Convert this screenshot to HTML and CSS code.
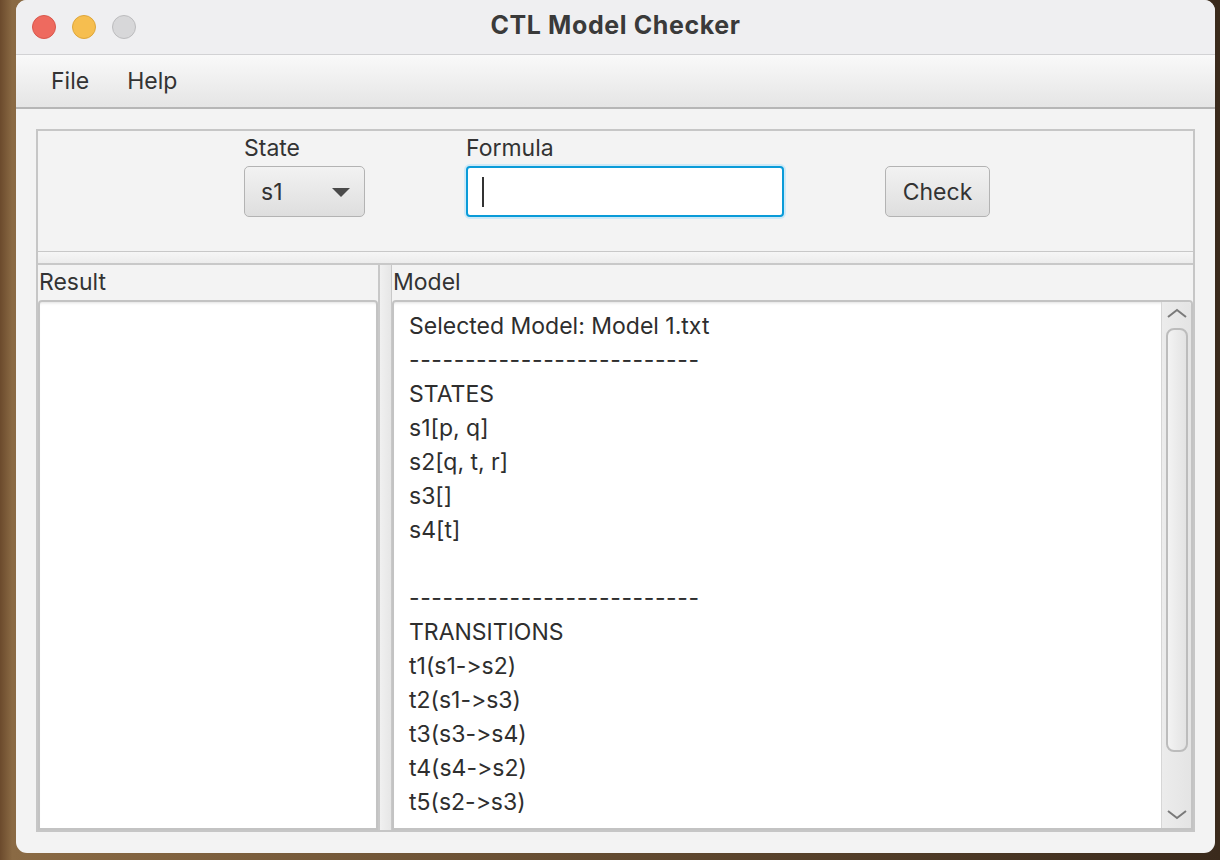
FILE: index.html
```html
<!DOCTYPE html>
<html>
<head>
<meta charset="utf-8">
<title>CTL Model Checker</title>
<link rel="stylesheet" href="styles.css">
</head>
<body>
<div class="window">
  <div class="titlebar">
    <div class="lights">
      <span class="light red"></span>
      <span class="light yellow"></span>
      <span class="light gray"></span>
    </div>
    <div class="title">CTL Model Checker</div>
    <div></div>
  </div>
  <div class="menubar">
    <span class="menu">File</span>
    <span class="menu">Help</span>
  </div>
  <div class="content">
    <div class="split">
      <div class="toppane">
        <div class="field state">
          <div class="label">State</div>
          <div class="combo">
            <span>s1</span>
            <svg class="caret" width="18" height="9" viewBox="0 0 18 9"><path d="M0 0 H18 L9 9 Z" fill="#4a4a4a"/></svg>
          </div>
        </div>
        <div class="field formula">
          <div class="label">Formula</div>
          <div class="textfield"><span class="cursor"></span></div>
        </div>
        <div class="btn">Check</div>
      </div>
      <div class="hdivider"></div>
      <div class="bottompane">
        <div class="pane result">
          <div class="plabel">Result</div>
          <div class="area"></div>
        </div>
        <div class="vdivider"></div>
        <div class="pane model">
          <div class="plabel">Model</div>
          <div class="area modelarea">
            <div class="text">
              <div>Selected Model: Model 1.txt</div>
              <div class="rule">--------------------------</div>
              <div>STATES</div>
              <div>s1[p, q]</div>
              <div>s2[q, t, r]</div>
              <div>s3[]</div>
              <div>s4[t]</div>
              <div>&nbsp;</div>
              <div class="rule">--------------------------</div>
              <div>TRANSITIONS</div>
              <div>t1(s1-&gt;s2)</div>
              <div>t2(s1-&gt;s3)</div>
              <div>t3(s3-&gt;s4)</div>
              <div>t4(s4-&gt;s2)</div>
              <div>t5(s2-&gt;s3)</div>
            </div>
            <div class="scrollbar">
              <svg class="arrow" width="20" height="10" viewBox="0 0 20 10"><path d="M1 9 L10 2 L19 9" fill="none" stroke="#7a7a7a" stroke-width="2"/></svg>
              <div class="thumb"></div>
              <svg class="arrow" width="20" height="10" viewBox="0 0 20 10"><path d="M1 1 L10 8 L19 1" fill="none" stroke="#7a7a7a" stroke-width="2"/></svg>
            </div>
          </div>
        </div>
      </div>
    </div>
  </div>
</div>
</body>
</html>
```
FILE: styles.css
```css
* { box-sizing: border-box; }
html, body { margin: 0; height: 860px; overflow: hidden; }
body {
  background: linear-gradient(90deg, #6b4a2c 0%, #8a6a44 1%, #3a2a1c 100%);
  font-family: Inter, "Liberation Sans", sans-serif;
  font-feature-settings: "calt" 0, "liga" 0;
  font-variant-ligatures: none;
  color: #2b2b2b;
}
.window {
  margin-left: 16px;
  width: 1199px;
  height: 853px;
  border-radius: 11px;
  overflow: hidden;
  background: #f3f3f3;
  display: flex;
  flex-direction: column;
}
.titlebar {
  height: 55px;
  background: #efeff1;
  border-bottom: 1px solid #d2d2d4;
  display: grid;
  grid-template-columns: 1fr auto 1fr;
  align-items: center;
}
.lights { display: flex; gap: 16px; padding-left: 16px; }
.light { width: 24px; height: 24px; border-radius: 50%; display: block; }
.red { background: #ee6a5f; border: 1px solid #d9574c; }
.yellow { background: #f6be4f; border: 1px solid #dea63a; }
.gray { background: #d7d7d9; border: 1px solid #bcbcbe; }
.title { font-weight: 700; font-size: 25px; letter-spacing: 0.6px; color: #3a3a3a; margin-top: -4px; }
.menubar {
  height: 54px;
  background: linear-gradient(#f9f9f9, #e5e5e5);
  border-bottom: 2px solid #b6b6b6;
  display: flex;
  align-items: center;
  padding-left: 35px;
  gap: 38px;
  font-size: 23px;
  color: #333;
}
.content { flex: 1; padding: 20px 20px 21px 20px; display: flex; }
.split {
  flex: 1;
  border: 2px solid #c6c6c6;
  display: flex;
  flex-direction: column;
}
.toppane {
  height: 120px;
  display: flex;
  align-items: flex-end;
  padding: 0 0 34px 206px;
}
.field { display: flex; flex-direction: column; gap: 3px; }
.label { font-size: 23px; color: #333; line-height: 30px; }
.state { width: 120px; }
.formula { margin-left: 102px; }
.combo {
  width: 121px;
  height: 51px;
  border: 1px solid #b3b3b3;
  border-radius: 5px;
  background: linear-gradient(#f2f2f2, #dedede);
  display: flex;
  align-items: center;
  justify-content: space-between;
  padding: 0 14px 0 16px;
  font-size: 23px;
  color: #333;
}
.caret { margin-top: 1px; }
.textfield {
  width: 318px;
  height: 51px;
  border: 2px solid #0a9bd8;
  border-radius: 4px;
  background: #fff;
  box-shadow: 0 0 0 2px #cde9f7;
  display: flex;
  align-items: center;
  padding-left: 14px;
}
.cursor { width: 2px; height: 30px; background: #333; }
.btn {
  margin-left: 101px;
  width: 105px;
  height: 51px;
  border: 1px solid #b3b3b3;
  border-radius: 5px;
  background: linear-gradient(#f2f2f2, #dedede);
  display: flex;
  align-items: center;
  justify-content: center;
  font-size: 23px;
  color: #333;
}
.hdivider {
  height: 14px;
  border-top: 1px solid #c8c8c8;
  border-bottom: 2px solid #c8c8c8;
  background: linear-gradient(#f6f6f6, #ececec);
}
.bottompane { flex: 1; display: flex; }
.pane { display: flex; flex-direction: column; }
.result { width: 340px; }
.model { flex: 1; }
.vdivider {
  width: 14px;
  border-left: 2px solid #c8c8c8;
  border-right: 1px solid #c8c8c8;
  background: linear-gradient(90deg, #f0f0f0, #e6e6e6);
}
.plabel { font-size: 23px; color: #333; height: 35px; line-height: 35px; padding-left: 1px; }
.area {
  flex: 1;
  background: #fff;
  border: 2px solid #c3c3c3;
  border-radius: 4px 4px 0 0;
  box-shadow: inset 0 3px 3px -2px rgba(0,0,0,0.12);
}
.modelarea { display: flex; }
.text {
  flex: 1;
  padding: 7px 0 0 15px;
  font-size: 23px;
  line-height: 34px;
  color: #2e2e2e;
}
.rule { letter-spacing: 0.6px; }
.scrollbar {
  width: 30px;
  border-left: 1px solid #d6d6d6;
  background: linear-gradient(90deg, #ececec, #e4e4e4);
  border-top-right-radius: 4px;
  display: flex;
  flex-direction: column;
  align-items: center;
  padding: 6px 0 8px;
}
.arrow { display: block; }
.thumb {
  margin: 10px 0 58px;
  width: 22px;
  flex: 1;
  border: 2px solid #bcbcbc;
  border-radius: 8px;
  background: linear-gradient(90deg, #f3f3f3, #e3e3e3);
}
```
